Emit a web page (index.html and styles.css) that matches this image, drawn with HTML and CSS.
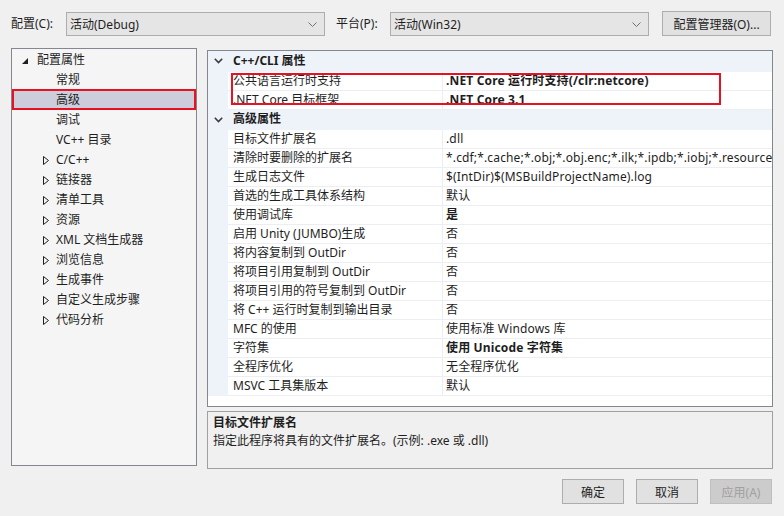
FILE: index.html
```html
<!DOCTYPE html>
<html lang="zh-CN">

<head>
    <meta charset="UTF-8">
    <title>属性页</title>
    <link rel="stylesheet" href="styles.css">
</head>

<body>
    <div class="dialog">
        <div class="toolbar">
            <span class="tb-label">配置(C):</span>
            <div class="combo">
                <span>活动(Debug)</span>
                <svg class="combo-arrow" width="9" height="5" viewBox="0 0 9 5"><polyline points="0.5,0.5 4.5,4.5 8.5,0.5" fill="none" stroke="#707070" stroke-width="1"/></svg>
            </div>
            <span class="tb-label plat">平台(P):</span>
            <div class="combo">
                <span>活动(Win32)</span>
                <svg class="combo-arrow" width="9" height="5" viewBox="0 0 9 5"><polyline points="0.5,0.5 4.5,4.5 8.5,0.5" fill="none" stroke="#707070" stroke-width="1"/></svg>
            </div>
            <button class="btn mgr">配置管理器(O)...</button>
        </div>

        <div class="main">
            <ul class="tree">
                <li class="node root"><span class="tog"><svg width="6" height="6" viewBox="0 0 6 6"><polygon points="6,0 6,6 0,6" fill="#1e1e1e"/></svg></span>配置属性</li>
                <li class="node child"><span class="tog"></span>常规</li>
                <li class="node child sel"><span class="tog"></span>高级</li>
                <li class="node child"><span class="tog"></span>调试</li>
                <li class="node child"><span class="tog"></span>VC++ 目录</li>
                <li class="node child"><span class="tog"><svg width="6" height="9" viewBox="0 0 6 9"><polygon points="0.5,0.5 5.5,4.5 0.5,8.5" fill="none" stroke="#1e1e1e"/></svg></span>C/C++</li>
                <li class="node child"><span class="tog"><svg width="6" height="9" viewBox="0 0 6 9"><polygon points="0.5,0.5 5.5,4.5 0.5,8.5" fill="none" stroke="#1e1e1e"/></svg></span>链接器</li>
                <li class="node child"><span class="tog"><svg width="6" height="9" viewBox="0 0 6 9"><polygon points="0.5,0.5 5.5,4.5 0.5,8.5" fill="none" stroke="#1e1e1e"/></svg></span>清单工具</li>
                <li class="node child"><span class="tog"><svg width="6" height="9" viewBox="0 0 6 9"><polygon points="0.5,0.5 5.5,4.5 0.5,8.5" fill="none" stroke="#1e1e1e"/></svg></span>资源</li>
                <li class="node child"><span class="tog"><svg width="6" height="9" viewBox="0 0 6 9"><polygon points="0.5,0.5 5.5,4.5 0.5,8.5" fill="none" stroke="#1e1e1e"/></svg></span>XML 文档生成器</li>
                <li class="node child"><span class="tog"><svg width="6" height="9" viewBox="0 0 6 9"><polygon points="0.5,0.5 5.5,4.5 0.5,8.5" fill="none" stroke="#1e1e1e"/></svg></span>浏览信息</li>
                <li class="node child"><span class="tog"><svg width="6" height="9" viewBox="0 0 6 9"><polygon points="0.5,0.5 5.5,4.5 0.5,8.5" fill="none" stroke="#1e1e1e"/></svg></span>生成事件</li>
                <li class="node child"><span class="tog"><svg width="6" height="9" viewBox="0 0 6 9"><polygon points="0.5,0.5 5.5,4.5 0.5,8.5" fill="none" stroke="#1e1e1e"/></svg></span>自定义生成步骤</li>
                <li class="node child"><span class="tog"><svg width="6" height="9" viewBox="0 0 6 9"><polygon points="0.5,0.5 5.5,4.5 0.5,8.5" fill="none" stroke="#1e1e1e"/></svg></span>代码分析</li>
            </ul>

            <div class="right">
                <div class="grid">
                    <div class="group">
                        <span class="gut"><svg width="9" height="6" viewBox="0 0 9 6"><polyline points="0.8,0.8 4.5,4.6 8.2,0.8" fill="none" stroke="#3c3c3c" stroke-width="1.6"/></svg></span>
                        <span class="gname">C++/CLI 属性</span>
                    </div>
                    <div class="row"><span class="gut"></span><span class="name">公共语言运行时支持</span><span class="val b">.NET Core 运行时支持(/clr:netcore)</span></div>
                    <div class="row"><span class="gut"></span><span class="name">.NET Core 目标框架</span><span class="val b">.NET Core 3.1</span></div>
                    <div class="group">
                        <span class="gut"><svg width="9" height="6" viewBox="0 0 9 6"><polyline points="0.8,0.8 4.5,4.6 8.2,0.8" fill="none" stroke="#3c3c3c" stroke-width="1.6"/></svg></span>
                        <span class="gname">高级属性</span>
                    </div>
                    <div class="row"><span class="gut"></span><span class="name">目标文件扩展名</span><span class="val">.dll</span></div>
                    <div class="row"><span class="gut"></span><span class="name">清除时要删除的扩展名</span><span class="val">*.cdf;*.cache;*.obj;*.obj.enc;*.ilk;*.ipdb;*.iobj;*.resources;*.tlb;*.tli;*.tlh;*.tmp</span></div>
                    <div class="row"><span class="gut"></span><span class="name">生成日志文件</span><span class="val">$(IntDir)$(MSBuildProjectName).log</span></div>
                    <div class="row"><span class="gut"></span><span class="name">首选的生成工具体系结构</span><span class="val">默认</span></div>
                    <div class="row"><span class="gut"></span><span class="name">使用调试库</span><span class="val b">是</span></div>
                    <div class="row"><span class="gut"></span><span class="name">启用 Unity (JUMBO)生成</span><span class="val">否</span></div>
                    <div class="row"><span class="gut"></span><span class="name">将内容复制到 OutDir</span><span class="val">否</span></div>
                    <div class="row"><span class="gut"></span><span class="name">将项目引用复制到 OutDir</span><span class="val">否</span></div>
                    <div class="row"><span class="gut"></span><span class="name">将项目引用的符号复制到 OutDir</span><span class="val">否</span></div>
                    <div class="row"><span class="gut"></span><span class="name">将 C++ 运行时复制到输出目录</span><span class="val">否</span></div>
                    <div class="row"><span class="gut"></span><span class="name">MFC 的使用</span><span class="val">使用标准 Windows 库</span></div>
                    <div class="row"><span class="gut"></span><span class="name">字符集</span><span class="val b">使用 Unicode 字符集</span></div>
                    <div class="row"><span class="gut"></span><span class="name">全程序优化</span><span class="val">无全程序优化</span></div>
                    <div class="row"><span class="gut"></span><span class="name">MSVC 工具集版本</span><span class="val">默认</span></div>
                    <div class="mark"></div>
                </div>
                <div class="desc">
                    <div class="desc-title">目标文件扩展名</div>
                    <div class="desc-text">指定此程序将具有的文件扩展名。(示例: .exe 或 .dll)</div>
                </div>
            </div>
        </div>

        <div class="footer">
            <button class="btn">确定</button>
            <button class="btn">取消</button>
            <button class="btn off">应用(A)</button>
        </div>
    </div>
</body>

</html>
```

FILE: styles.css
```css
body {
    margin: 0;
    background: #f0f0f0;
    font-family: "Noto Sans", "Noto Sans CJK SC", sans-serif;
    font-size: 12px;
    color: #1e1e1e;
}

.dialog {
    width: 784px;
    height: 516px;
    padding: 0 11px 0 11px;
    box-sizing: border-box;
}

/* top bar */
.toolbar {
    display: flex;
    align-items: flex-start;
    height: 48px;
    padding-top: 11px;
    box-sizing: border-box;
}

.tb-label {
    width: 55px;
    height: 24px;
    line-height: 24px;
    margin-top: 1px;
}

.tb-label.plat {
    margin-left: 11px;
    width: 54px;
}

.combo {
    width: 259px;
    height: 24px;
    margin-top: 1px;
    box-sizing: border-box;
    border: 1px solid #adadad;
    background: #e5e5e5;
    display: flex;
    align-items: center;
    justify-content: space-between;
    padding: 0 7px 0 3px;
}

.combo-arrow {
    display: block;
}

.btn {
    font-family: inherit;
    font-size: 12px;
    color: #1e1e1e;
    background: #e1e1e1;
    border: 1px solid #adadad;
    height: 25px;
    width: 62px;
    padding: 0;
    box-sizing: border-box;
}

.btn.mgr {
    width: 109px;
    margin-left: 13px;
}

.btn.off {
    background: #cccccc;
    border-color: #bfbfbf;
    color: #a0a0a0;
}

/* content */
.main {
    display: flex;
    align-items: flex-start;
}

.tree {
    list-style: none;
    margin: 0;
    padding: 1px 0 0 0;
    width: 186px;
    height: 418px;
    box-sizing: border-box;
    border: 1px solid #828790;
    background: #f5f5f5;
}

.node {
    height: 20px;
    line-height: 20px;
    display: flex;
    align-items: center;
    position: relative;
    white-space: nowrap;
}

.node.root {
    padding-left: 10px;
}

.node.root .tog {
    width: 15px;
    padding-top: 1px;
}

.node.child {
    padding-left: 31px;
}

.tog {
    width: 13px;
    display: flex;
    align-items: center;
}

.tog svg {
    display: block;
}

.node.sel {
    background: #cccedb;
}

.node.sel::after {
    content: "";
    position: absolute;
    left: 0;
    right: 0;
    top: -1px;
    bottom: 0;
    border: 2px solid #e81123;
}

.right {
    margin-left: 10px;
    margin-top: 2px;
    width: 566px;
}

.grid {
    height: 357px;
    box-sizing: border-box;
    border: 1px solid #828790;
    background: #ffffff;
    position: relative;
    overflow: hidden;
}

.group,
.row {
    display: flex;
    height: 19px;
    line-height: 18px;
    white-space: nowrap;
}

.group {
    background: #eef2f9;
    border-bottom: 1px solid #eef2f9;
}

.group:first-child {
    height: 20px;
    line-height: 20px;
}

.gut {
    width: 20px;
    flex-shrink: 0;
    background: #eef2f9;
    display: flex;
    align-items: center;
    justify-content: center;
}

.gname {
    font-weight: bold;
    padding-left: 5px;
}

.name {
    width: 215px;
    flex-shrink: 0;
    padding-left: 5px;
    box-sizing: border-box;
    border-right: 1px solid #eceef3;
    border-bottom: 1px solid #eceef3;
}

.val {
    flex: 1;
    padding-left: 3px;
    overflow: hidden;
    border-bottom: 1px solid #eceef3;
    letter-spacing: 0.15px;
}

.val.b {
    font-weight: bold;
}

/* annotation frame over the two C++/CLI rows */
.mark {
    position: absolute;
    left: 23px;
    top: 22px;
    width: 490px;
    height: 32px;
    border: 2px solid #e81123;
    box-sizing: border-box;
}

.desc {
    margin-top: 4px;
    height: 58px;
    box-sizing: border-box;
    border: 1px solid #a0a0a0;
    padding: 2px 5px;
}

.desc-title {
    font-weight: bold;
    line-height: 18px;
}

.desc-text {
    line-height: 18px;
}

.footer {
    display: flex;
    justify-content: flex-end;
    gap: 12px;
    padding-top: 10px;
    padding-right: 1px;
}
```
